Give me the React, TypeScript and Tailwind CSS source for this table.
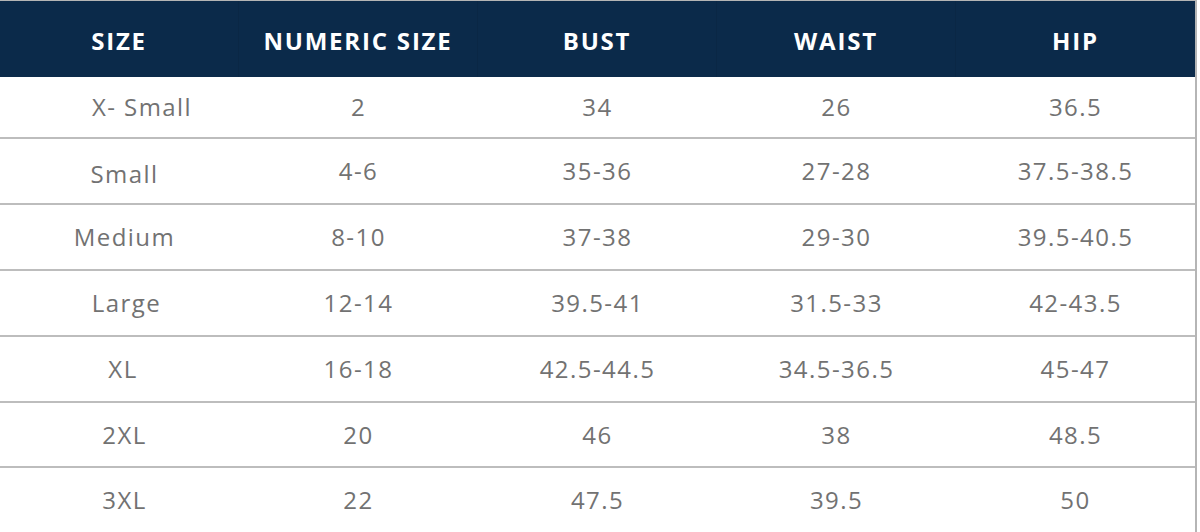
const headers = ["SIZE", "NUMERIC SIZE", "BUST", "WAIST", "HIP"];

const rows: { label: string; pad: string; cells: string[]; h: string }[] = [
  { label: "X- Small", pad: "pl-[45px]", cells: ["2", "34", "26", "36.5"], h: "h-[60px]" },
  { label: "Small", pad: "pl-[10px] pt-[6px]", cells: ["4-6", "35-36", "27-28", "37.5-38.5"], h: "h-[66px]" },
  { label: "Medium", pad: "pl-[10px]", cells: ["8-10", "37-38", "29-30", "39.5-40.5"], h: "h-[66px]" },
  { label: "Large", pad: "pl-[14px]", cells: ["12-14", "39.5-41", "31.5-33", "42-43.5"], h: "h-[66px]" },
  { label: "XL", pad: "pl-[7px]", cells: ["16-18", "42.5-44.5", "34.5-36.5", "45-47"], h: "h-[66px]" },
  { label: "2XL", pad: "pl-[10px]", cells: ["20", "46", "38", "48.5"], h: "h-[65px]" },
  { label: "3XL", pad: "pl-[10px]", cells: ["22", "47.5", "39.5", "50"], h: "h-[66px]" },
];

export default function App() {
  return (
    <div className="w-[1200px] h-[532px] bg-white font-['Open_Sans',sans-serif]">
      <div className="w-[1197px] border-t border-r-2 border-b-2 border-[#b5b5b5]">
        <div className="grid grid-cols-5 h-[76px] bg-[#0b2a4a]">
          {headers.map((h, i) => (
            <div
              key={h}
              className={
                i < 4
                  ? "flex items-center justify-center pt-[4px] border-r border-[#0a2745] text-white text-[24px] font-bold tracking-[0.075em]"
                  : "flex items-center justify-center pt-[4px] text-white text-[24px] font-bold tracking-[0.075em]"
              }
            >
              {h}
            </div>
          ))}
        </div>
        {rows.map((r, idx) => (
          <div
            key={r.label}
            className={
              idx === 0
                ? `grid grid-cols-5 ${r.h} text-[24px] tracking-[0.06em] text-[#727272]`
                : `grid grid-cols-5 ${r.h} border-t-2 border-[#bdbdbd] text-[24px] tracking-[0.06em] text-[#727272]`
            }
          >
            <div className={`flex items-center justify-center ${r.pad}`}>{r.label}</div>
            {r.cells.map((c, j) => (
              <div key={j} className="flex items-center justify-center">
                {c}
              </div>
            ))}
          </div>
        ))}
      </div>
    </div>
  );
}
